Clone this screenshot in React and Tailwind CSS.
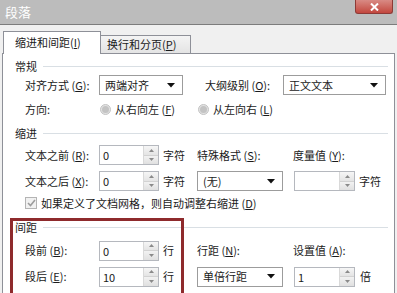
import React from "react";

function K({ c }) {
  return (
    <span>
      {" "}(<span className="underline underline-offset-1">{c}</span>)
    </span>
  );
}

function Arrow() {
  return (
    <svg width="8" height="5" viewBox="0 0 8 5" className="shrink-0">
      <path d="M0 0 H8 L4 4.5 Z" fill="#111" />
    </svg>
  );
}

function Combo({ text, className }) {
  return (
    <div className={"flex h-[20px] items-center border border-[#9c9c9c] bg-white pl-[5px] pr-[7px] " + className}>
      <span className="flex-1 whitespace-nowrap">{text}</span>
      <Arrow />
    </div>
  );
}

function Spin({ value, className }) {
  return (
    <div className={"flex h-[20px] border border-[#b5b8be] bg-white " + className}>
      <div className="flex-1 pl-[3px] leading-[18px]">{value}</div>
      <div className="flex w-[15px] flex-col border-l border-[#d9d9d9] bg-[#ececec]">
        <div className="flex flex-1 items-center justify-center border-b border-[#d2d2d2] bg-gradient-to-b from-[#f6f6f6] to-[#e4e4e4]">
          <svg width="5" height="3" viewBox="0 0 5 3">
            <path d="M0 3 L2.5 0 L5 3 Z" fill="#8a8a8a" />
          </svg>
        </div>
        <div className="flex flex-1 items-center justify-center bg-gradient-to-b from-[#f2f2f2] to-[#e0e0e0]">
          <svg width="5" height="3" viewBox="0 0 5 3">
            <path d="M0 0 L5 0 L2.5 3 Z" fill="#8a8a8a" />
          </svg>
        </div>
      </div>
    </div>
  );
}

function Radio() {
  return (
    <span className="flex h-[11px] w-[11px] items-center justify-center rounded-full border border-[#c4c4c4] bg-[#e2e2e2]">
      <span className="h-[7px] w-[7px] rounded-full bg-[#c3c3c3]" />
    </span>
  );
}

function Header({ text, className }) {
  return (
    <div className={"flex h-[14px] items-center pl-[12px] pr-[6px] " + className}>
      <span>{text}</span>
      <div className="ml-[6px] h-px flex-1 bg-[#d9dfe4]" />
    </div>
  );
}

export default function App() {
  return (
    <div className="relative h-[293px] w-[397px] overflow-hidden bg-[#f0f0f0] font-['Noto_Sans_CJK_SC',sans-serif] text-[11px] leading-none text-[#1a1a1a]">
      {/* title bar */}
      <div className="flex h-[25px] items-start justify-between border-b border-[#7c7c7c] bg-[#bcbcbc]">
        <div className="pl-[5px] pt-[5px] text-[13px] text-white">段落</div>
        <div className="mr-[4px] flex h-[14px] w-[38px] items-center justify-center rounded-b-[3px] border border-t-0 border-[#8e3a36] bg-gradient-to-b from-[#d88a84] to-[#c2463e]">
          <svg width="9" height="8" viewBox="0 0 9 8">
            <path d="M1 0.5 L8 7.5 M8 0.5 L1 7.5" stroke="#fff" strokeWidth="2" />
          </svg>
        </div>
      </div>

      {/* body */}
      <div className="flex flex-col px-[2px]">
        {/* tabs */}
        <div className="flex h-[28px] items-end pl-[1px]">
          <div className="relative z-10 -mb-px flex h-[23px] w-[98px] items-center border border-b-0 border-[#8e9098] bg-white pl-[11px] pb-[2px]">
            缩进和间距<K c="I" />
          </div>
          <div className="flex h-[18px] w-[90px] items-center border-t border-r border-[#8e9098] bg-gradient-to-b from-[#f4f4f4] to-[#e4e4e4] pl-[6px]">
            换行和分页<K c="P" />
          </div>
        </div>

        {/* panel */}
        <div className="h-[260px] border border-b-0 border-[#8e9098] bg-white">
          <Header text="常规" className="mt-[5px]" />

          <div className="mt-[2px] flex h-[20px] items-center pl-[22px]">
            <span className="w-[74px] whitespace-nowrap">对齐方式<K c="G" />:</span>
            <Combo text="两端对齐" className="w-[84px]" />
            <span className="ml-[22px] w-[78px] whitespace-nowrap">大纲级别<K c="O" />:</span>
            <Combo text="正文文本" className="w-[103px]" />
          </div>

          <div className="mt-[4px] flex h-[20px] items-center pl-[22px]">
            <span className="w-[75px]">方向:</span>
            <div className="flex w-[98px] items-center gap-[4px]">
              <Radio />
              <span className="whitespace-nowrap">从右向左<K c="F" /></span>
            </div>
            <div className="flex items-center gap-[4px]">
              <Radio />
              <span className="whitespace-nowrap">从左向右<K c="L" /></span>
            </div>
          </div>

          <Header text="缩进" className="mt-[7px]" />

          <div className="mt-[5px] flex h-[20px] items-center pl-[22px]">
            <span className="w-[74px] whitespace-nowrap">文本之前<K c="R" />:</span>
            <Spin value="0" className="w-[60px]" />
            <span className="ml-[4px] w-[34px]">字符</span>
            <span className="w-[96px] whitespace-nowrap">特殊格式<K c="S" />:</span>
            <span className="whitespace-nowrap">度量值<K c="Y" />:</span>
          </div>

          <div className="mt-[6px] flex h-[20px] items-center pl-[22px]">
            <span className="w-[74px] whitespace-nowrap">文本之后<K c="X" />:</span>
            <Spin value="0" className="w-[60px]" />
            <span className="ml-[4px] w-[34px]">字符</span>
            <Combo text="(无)" className="w-[86px]" />
            <Spin value="" className="ml-[11px] w-[61px]" />
            <span className="ml-[4px]">字符</span>
          </div>

          <div className="mt-[5px] flex h-[14px] items-center gap-[4px] pl-[22px]">
            <span className="flex h-[12px] w-[12px] items-center justify-center border border-[#b4b4b4] bg-[#f1f1f1]">
              <svg width="9" height="8" viewBox="0 0 9 8">
                <path d="M1 4 L3.5 6.5 L8 1" stroke="#9c9c9c" strokeWidth="1.6" fill="none" />
              </svg>
            </span>
            <span className="whitespace-nowrap">如果定义了文档网格，则自动调整右缩进<K c="D" /></span>
          </div>

          <Header text="间距" className="mt-[10px]" />

          <div className="mt-[7px] flex h-[19px] items-center pl-[22px]">
            <span className="w-[74px] whitespace-nowrap">段前<K c="B" />:</span>
            <Spin value="0" className="w-[60px]" />
            <span className="ml-[4px] w-[34px]">行</span>
            <span className="w-[96px] whitespace-nowrap">行距<K c="N" />:</span>
            <span className="whitespace-nowrap">设置值<K c="A" />:</span>
          </div>

          <div className="mt-[7px] flex h-[19px] items-center pl-[22px]">
            <span className="w-[74px] whitespace-nowrap">段后<K c="E" />:</span>
            <Spin value="10" className="w-[60px]" />
            <span className="ml-[4px] w-[34px]">行</span>
            <Combo text="单倍行距" className="w-[86px]" />
            <Spin value="1" className="ml-[11px] w-[61px]" />
            <span className="ml-[5px]">倍</span>
          </div>
        </div>
      </div>

      {/* red annotation box */}
      <div className="absolute left-[10px] top-[218px] h-[90px] w-[174px] border-[3px] border-[#8e2a2c]" />
    </div>
  );
}
